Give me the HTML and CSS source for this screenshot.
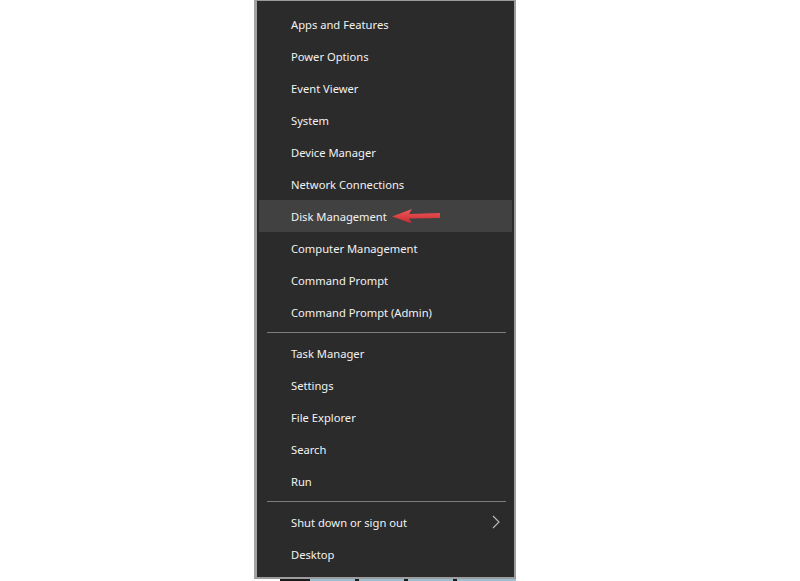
FILE: index.html
```html
<!DOCTYPE html>
<html>
<head>
<meta charset="utf-8">
<link rel="stylesheet" href="styles.css">
</head>
<body>
<div class="page">
  <div class="menu">
    <ul class="group">
      <li class="item">Apps and Features</li>
      <li class="item">Power Options</li>
      <li class="item">Event Viewer</li>
      <li class="item">System</li>
      <li class="item">Device Manager</li>
      <li class="item">Network Connections</li>
      <li class="item active">Disk Management
        <svg class="arrow" width="52" height="18" viewBox="0 0 52 18">
          <defs>
            <linearGradient id="ag" x1="0" y1="0" x2="0" y2="1">
              <stop offset="0" stop-color="#f25a5e"/>
              <stop offset="1" stop-color="#c42a2e"/>
            </linearGradient>
          </defs>
          <path d="M1 9.5 L21 2 L18 7 L49 6 L49 11 L18 11.5 L21 16.5 Z" fill="url(#ag)"/>
        </svg>
      </li>
      <li class="item">Computer Management</li>
      <li class="item">Command Prompt</li>
      <li class="item">Command Prompt (Admin)</li>
    </ul>
    <div class="sep"></div>
    <ul class="group">
      <li class="item">Task Manager</li>
      <li class="item">Settings</li>
      <li class="item">File Explorer</li>
      <li class="item">Search</li>
      <li class="item">Run</li>
    </ul>
    <div class="sep"></div>
    <ul class="group">
      <li class="item sub">Shut down or sign out
        <svg class="chev" width="8" height="14" viewBox="0 0 8 14"><path d="M1 1 L7 7 L1 13" fill="none" stroke="#bdbdbd" stroke-width="1.1"/></svg>
      </li>
      <li class="item">Desktop</li>
    </ul>
  </div>
  <div class="taskbar">
    <span class="tb-dark first"></span>
    <span class="tb-light"></span>
    <span class="tb-dark"></span>
    <span class="tb-light"></span>
    <span class="tb-dark"></span>
    <span class="tb-light"></span>
    <span class="tb-dark"></span>
    <span class="tb-light"></span>
  </div>
</div>
</body>
</html>
```

FILE: styles.css
```css
html, body {
  margin: 0;
  padding: 0;
  background: #ffffff;
}

.page {
  width: 800px;
  height: 581px;
  overflow: hidden;
  display: flex;
  flex-direction: column;
}

.menu {
  margin-left: 254px;
  width: 257px;
  background: #2b2b2b;
  border-left: 3px solid #a3a3a3;
  border-right: 2px solid #9c9c9c;
  border-top: 1px solid #9c9c9c;
  border-bottom: 2px solid #9c9c9c;
  padding: 7px 0 7px 0;
  font-family: "Noto Sans", "Open Sans", sans-serif;
  font-size: 11.2px;
  color: #f2f2f2;
}

.group {
  list-style: none;
  margin: 0;
  padding: 0;
}

.item {
  height: 32px;
  display: flex;
  align-items: center;
  padding-left: 32px;
  margin: 0 2px;
  position: relative;
  white-space: nowrap;
}

.item.active {
  background: #414141;
}

.arrow {
  margin-left: 4px;
}

.sub {
  justify-content: space-between;
  padding-right: 12px;
}

.sep {
  height: 1px;
  background: #7d7d7d;
  margin: 4px 8px 4px 10px;
}

.taskbar {
  display: flex;
  height: 3px;
  margin-left: 280px;
  width: 236px;
}

.tb-dark {
  width: 4px;
  background: #1a1a1a;
}

.tb-dark.first {
  width: 30px;
}

.tb-light {
  width: 45px;
  background: #9dbfd2;
}

.tb-light:last-child {
  flex: 1;
}
```
